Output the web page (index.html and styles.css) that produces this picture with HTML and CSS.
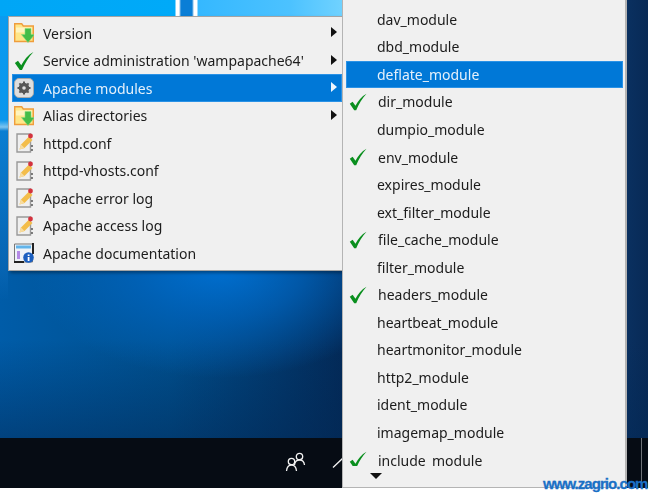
FILE: index.html
```html
<!DOCTYPE html>
<html lang="en">
<head>
<meta charset="utf-8">
<title>WampServer Apache modules menu</title>
<link rel="stylesheet" href="styles.css">
</head>
<body>
<svg class="defs" width="0" height="0" aria-hidden="true">
  <symbol id="folder" viewBox="0 0 20 20">
    <path d="M.7 .8h7l1.600 2.200h10v15.500H.7z" fill="#ffe689" stroke="#ef9d3c" stroke-width="1.400"/>
    <path d="M2 4.500h16v5H2z" fill="#fff4bf"/>
    <path d="M11 5.500h6v6h3.600l-6.600 8-6.600-8H11z" fill="#45bd48" stroke="#86da80" stroke-width=".6"/>
  </symbol>
  <symbol id="check" viewBox="0 0 18 18">
    <path d="M.8 10.800l2.800-2 2.900 4C9 8 12.500 3.500 17.500 .8 13 5.500 9.800 11 7.200 17.200H5.200z" fill="#0a8f1e"/>
  </symbol>
  <symbol id="gear" viewBox="0 0 20 20">
    <rect x=".5" y=".5" width="19" height="19" rx="4.500" fill="#dedede" stroke="#a8a8a8"/>
    <circle cx="10" cy="10" r="3.800" fill="none" stroke="#565656" stroke-width="3"/>
    <path d="M10 3.500v13M3.500 10h13M5.400 5.400l9.200 9.200M14.600 5.400l-9.200 9.200" stroke="#565656" stroke-width="2"/>
    <circle cx="10" cy="10" r="1.800" fill="#dedede"/>
  </symbol>
  <symbol id="note" viewBox="0 0 20 20">
    <path d="M3 1h13.500v18H3z" fill="#efefef" stroke="#999" stroke-width="1.400"/>
    <path d="M5.500 16.500l1.500-5 8-8 3.500 3.500-8 8z" fill="#f3bd4a"/>
    <path d="M5.500 16.500l1.500-5 3.500 3.500z" fill="#f7dca0"/>
    <circle cx="16.500" cy="3" r="2.400" fill="#d4323e"/>
    <path d="M18 12v2M18 16v2" stroke="#333" stroke-width="1.200"/>
  </symbol>
  <symbol id="doc" viewBox="0 0 20 20">
    <path d="M.5 1h18v18H.5z" fill="#eef3f8" stroke="#777"/>
    <path d="M2 2.500h15v3H2z" fill="#62b4ea"/>
    <path d="M3 8h3v8H3z" fill="#b58ae6"/>
    <path d="M18 0h2v11h-2zM0 18h10v2H0z" fill="#222"/>
    <circle cx="14.500" cy="14.500" r="5.300" fill="#1b5fc0"/>
    <path d="M13.700 11.500h1.800v1.500h-1.800zM13.700 14h1.800v4h-1.800z" fill="#fff"/>
  </symbol>
</svg>

<div class="stage">
  <main class="desktop"></main>
  <footer class="taskbar">
    <svg class="people" width="22" height="20" viewBox="0 0 22 20" aria-hidden="true">
      <circle cx="14.500" cy="4.500" r="3.200"/>
      <path d="M9.500 13c.3-3 2-5 5-5s4.700 2 5 5"/>
      <circle cx="6.500" cy="9.500" r="3.200"/>
      <path d="M1.500 19c.3-3 2-6 5-6s4.700 3 5 6"/>
    </svg>
    <svg class="chevron" width="20" height="10" viewBox="0 0 20 10" aria-hidden="true">
      <path d="M1 9.500L10 1l9 8.500"/>
    </svg>
  </footer>

  <nav class="menu menu-main">
    <div class="row"><svg class="ico"><use href="#folder"/></svg><span>Version</span><i class="arrow"></i></div>
    <div class="row"><svg class="ico"><use href="#check"/></svg><span>Service administration 'wampapache64'</span><i class="arrow"></i></div>
    <div class="row selected"><svg class="ico"><use href="#gear"/></svg><span>Apache modules</span><i class="arrow"></i></div>
    <div class="row"><svg class="ico"><use href="#folder"/></svg><span>Alias directories</span><i class="arrow"></i></div>
    <div class="row"><svg class="ico"><use href="#note"/></svg><span>httpd.conf</span></div>
    <div class="row"><svg class="ico"><use href="#note"/></svg><span>httpd-vhosts.conf</span></div>
    <div class="row"><svg class="ico"><use href="#note"/></svg><span>Apache error log</span></div>
    <div class="row"><svg class="ico"><use href="#note"/></svg><span>Apache access log</span></div>
    <div class="row"><svg class="ico"><use href="#doc"/></svg><span>Apache documentation</span></div>
  </nav>

  <nav class="menu menu-sub">
    <div class="sub-list">
      <div class="row"><span>data_module</span></div>
      <div class="row"><span>dav_module</span></div>
      <div class="row"><span>dbd_module</span></div>
      <div class="row selected"><span>deflate_module</span></div>
      <div class="row on"><svg class="tick"><use href="#check"/></svg><span>dir_module</span></div>
      <div class="row"><span>dumpio_module</span></div>
      <div class="row on"><svg class="tick"><use href="#check"/></svg><span>env_module</span></div>
      <div class="row"><span>expires_module</span></div>
      <div class="row"><span>ext_filter_module</span></div>
      <div class="row on"><svg class="tick"><use href="#check"/></svg><span>file_cache_module</span></div>
      <div class="row"><span>filter_module</span></div>
      <div class="row on"><svg class="tick"><use href="#check"/></svg><span>headers_module</span></div>
      <div class="row"><span>heartbeat_module</span></div>
      <div class="row"><span>heartmonitor_module</span></div>
      <div class="row"><span>http2_module</span></div>
      <div class="row"><span>ident_module</span></div>
      <div class="row"><span>imagemap_module</span></div>
      <div class="row on"><svg class="tick"><use href="#check"/></svg><span>include_module</span></div>
    </div>
    <i class="more"></i>
  </nav>

  <div class="watermark">www.zagrio.com</div>
</div>
</body>
</html>
```

FILE: styles.css
```css
* { box-sizing: border-box; }

html, body {
  margin: 0;
  width: 651px;
  height: 493px;
  overflow: hidden;
  background: #fff;
}

.defs { position: absolute; }

.stage {
  position: relative;
  width: 648px;
  height: 488px;
  display: flex;
  flex-direction: column;
  font-family: "Noto Sans", "Open Sans", sans-serif;
  font-size: 14px;
  color: #1c1c1c;
}

.desktop {
  flex: 1;
  background:
    linear-gradient(90deg, #00a6f6 0, #00aaf8 175px, #fff 176px, #fff 179px, #0a7ed6 181px, #0a7ed6 192px, #fff 194px, #fff 197px, #35b8ff 198px, #4cc2ff 290px, #70d2ff 342px) 0 0 / 344px 16px no-repeat,
    linear-gradient(180deg, #0a9cf0 0, #0a96ec 120px, #7cc4f0 127px, #0a7ed2 131px, #0664b2 270px, rgba(6, 90, 160, 0) 300px) 0 0 / 8px 300px no-repeat,
    radial-gradient(ellipse 190px 110px at 220px 268px, #006fd0 0, rgba(0, 102, 194, .7) 45%, rgba(0, 96, 180, 0) 100%),
    linear-gradient(180deg, rgba(2, 40, 84, 0) 340px, rgba(2, 40, 84, .5) 438px),
    linear-gradient(90deg, #005ca8 0, #00508f 170px, #032a58 342px, #0a3060 627px, #082a56 648px);
}

.taskbar {
  height: 50px;
  flex: none;
  display: flex;
  align-items: center;
  padding-left: 284.500px;
  gap: 25.500px;
  background: linear-gradient(90deg, #060c14 641.500px, #6e7278 641.500px, #6e7278 642.500px, #060c14 642.500px);
}

.people { margin-top: -3px; }
.chevron { margin-top: -1px; }

.people, .chevron {
  fill: none;
  stroke: #f2f2f2;
  stroke-width: 1.300;
}

.menu {
  position: absolute;
  background: #f0f0f0;
  border: 1px solid #a4a4a4;
  filter: blur(.3px);
}

.menu-main {
  left: 8px;
  top: 16px;
  width: 335px;
  height: 255px;
  padding: 2.250px 0 0 3px;
  box-shadow: 2px 2px 3px rgba(0, 0, 0, .35);
}

.menu-sub {
  left: 342px;
  top: -23px;
  width: 285px;
  height: 511px;
  padding: 0 0 0 3px;
  border-width: 1px 2px 1px 1px;
  border-color: #b4b4b4;
}

.sub-list {
  height: 488px;
  overflow: hidden;
}

.row {
  height: 27.500px;
  display: flex;
  align-items: center;
  padding-right: 5px;
}

.menu-main .row { padding-left: 2px; }
.menu-main .row span { margin-left: 9px; }

.menu-sub .row {
  width: 277px;
  height: 27.560px;
  padding-left: 31px;
}

.menu-sub .row.on { padding-left: 3px; }
.menu-sub .row.on span { margin-left: 11px; }

.selected {
  background: #0078d7;
  color: #e4f0fb;
  box-shadow: inset 0 0 0 1px #2a92e6;
}

.ico {
  width: 20px;
  height: 20px;
  flex: none;
}

.tick {
  width: 18px;
  height: 18px;
  flex: none;
}

.arrow {
  margin-left: auto;
  margin-top: -2px;
  width: 0;
  height: 0;
  border-left: 6px solid #111;
  border-top: 5px solid transparent;
  border-bottom: 5px solid transparent;
}

.selected .arrow { border-left-color: #eef6fd; }

.more {
  display: block;
  width: 0;
  height: 0;
  margin: 7px 0 0 24px;
  border-top: 6px solid #111;
  border-left: 6px solid transparent;
  border-right: 6px solid transparent;
}

.watermark {
  position: absolute;
  left: 543px;
  top: 476px;
  font-family: "Liberation Sans", Arial, sans-serif;
  font-weight: 700;
  font-size: 15px;
  line-height: 16px;
  color: #1a70c6;
  letter-spacing: -.95px;
  -webkit-text-stroke: .3px #1a70c6;
  white-space: nowrap;
}
```
